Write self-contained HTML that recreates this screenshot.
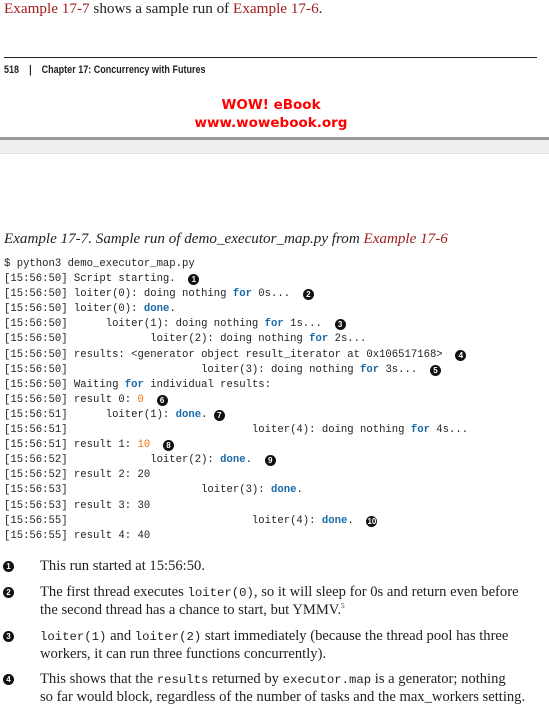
<!DOCTYPE html>
<html><head><meta charset="utf-8"><style>
body{margin:0;width:549px;height:694px;background:#fff;position:relative;overflow:hidden;font-family:"Liberation Serif",serif;color:#222}
.a{position:absolute;white-space:pre}
.r{color:#a01c1c}
pre{position:absolute;left:4px;top:257px;margin:0;font-family:"Liberation Mono",monospace;font-size:10.6px;line-height:15.1px;color:#222}
.k{color:#1a6aa8;font-weight:bold}
.o{color:#f07010}
.c{display:inline-block;width:11px;height:11px;border-radius:50%;background:#111;color:#fff;font:bold 8px/11px "Liberation Sans",sans-serif;text-align:center;vertical-align:-1px}
.m{font-family:"Liberation Mono",monospace;font-size:12.3px;line-height:10px}
.t{position:absolute;left:40px;font-size:14.6px;line-height:18px;width:500px}
.n{position:absolute;left:3px}
sup{font-size:7px;line-height:0}
</style></head><body>
<div class="a" style="left:4px;top:0px;font-size:15.2px"><span class="r">Example 17-7</span> shows a sample run of <span class="r">Example 17-6</span>.</div>
<div style="position:absolute;left:4px;top:57px;width:533px;height:1px;background:#222"></div>
<div class="a" style="left:4px;top:64px;font:bold 11px 'Liberation Sans Narrow','Liberation Sans',sans-serif;transform:scaleX(.82);transform-origin:left">518    |    Chapter 17: Concurrency with Futures</div>
<div class="a" style="left:0;width:542px;text-align:center;top:96px;font:bold 13.5px 'DejaVu Sans',sans-serif;color:#f00;line-height:18px">WOW! eBook<br>www.wowebook.org</div>
<div style="position:absolute;left:0;top:137px;width:549px;height:3px;background:#999"></div>
<div style="position:absolute;left:0;top:140px;width:549px;height:13px;background:#f0efed;border-bottom:1px solid #e2e2e2"></div>
<div class="a" style="left:4px;top:231px;font-size:15.1px;font-style:italic">Example 17-7. Sample run of demo_executor_map.py from <span class="r">Example 17-6</span></div>
<pre>$ python3 demo_executor_map.py
[15:56:50] Script starting.  <span class="c">1</span>
[15:56:50] loiter(0): doing nothing <span class="k">for</span> 0s...  <span class="c">2</span>
[15:56:50] loiter(0): <span class="k">done</span>.
[15:56:50]      loiter(1): doing nothing <span class="k">for</span> 1s...  <span class="c">3</span>
[15:56:50]             loiter(2): doing nothing <span class="k">for</span> 2s...
[15:56:50] results: &lt;generator object result_iterator at 0x106517168&gt;  <span class="c">4</span>
[15:56:50]                     loiter(3): doing nothing <span class="k">for</span> 3s...  <span class="c">5</span>
[15:56:50] Waiting <span class="k">for</span> individual results:
[15:56:50] result 0: <span class="o">0</span>  <span class="c">6</span>
[15:56:51]      loiter(1): <span class="k">done</span>. <span class="c">7</span>
[15:56:51]                             loiter(4): doing nothing <span class="k">for</span> 4s...
[15:56:51] result 1: <span class="o">10</span>  <span class="c">8</span>
[15:56:52]             loiter(2): <span class="k">done</span>.  <span class="c">9</span>
[15:56:52] result 2: 20
[15:56:53]                     loiter(3): <span class="k">done</span>.
[15:56:53] result 3: 30
[15:56:55]                             loiter(4): <span class="k">done</span>.  <span class="c">10</span>
[15:56:55] result 4: 40</pre>
<span class="c n" style="top:561px">1</span>
<div class="t" style="top:557px">This run started at 15:56:50.</div>
<span class="c n" style="top:587px">2</span>
<div class="t" style="top:583px">The first thread executes <span class="m">loiter(0)</span>, so it will sleep for 0s and return even before<br>the second thread has a chance to start, but YMMV.<sup>5</sup></div>
<span class="c n" style="top:631px">3</span>
<div class="t" style="top:627px"><span class="m">loiter(1)</span> and <span class="m">loiter(2)</span> start immediately (because the thread pool has three<br>workers, it can run three functions concurrently).</div>
<span class="c n" style="top:674px">4</span>
<div class="t" style="top:670px">This shows that the <span class="m">results</span> returned by <span class="m">executor.map</span> is a generator; nothing<br>so far would block, regardless of the number of tasks and the max_workers setting.</div>
</body></html>
